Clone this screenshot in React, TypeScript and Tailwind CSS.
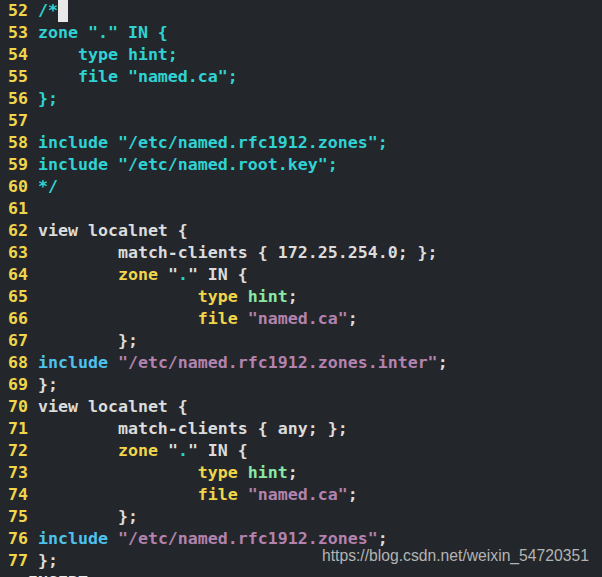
import React from "react";

type Seg = [string, string];

const W = "text-[#dcdcdc]";
const C = "text-[#2fd3d3]";
const Y = "text-[#f1d54a]";
const G = "text-[#8ae8a6]";
const B = "text-[#4ec2ec]";
const P = "text-[#b482ae]";

const T = "        ";

const zoneBlock = (): Seg[][] => [
  [[T, W], ["zone", Y], [" \"", W], [".", C], ["\" IN {", W]],
  [[T + T, W], ["type", Y], [" ", W], ["hint", G], [";", W]],
  [[T + T, W], ["file", Y], [" ", W], ["\"named.ca\"", P], [";", W]],
  [[T + "};", W]],
];

const lines: Seg[][] = [
  [["/*", C]],
  [["zone \".\" IN {", C]],
  [["    type hint;", C]],
  [["    file \"named.ca\";", C]],
  [["};", C]],
  [],
  [["include \"/etc/named.rfc1912.zones\";", C]],
  [["include \"/etc/named.root.key\";", C]],
  [["*/", C]],
  [],
  [["view localnet {", W]],
  [[T + "match-clients { 172.25.254.0; };", W]],
  ...zoneBlock(),
  [["include", B], [" ", W], ["\"/etc/named.rfc1912.zones.inter\"", P], [";", W]],
  [["};", W]],
  [["view localnet {", W]],
  [[T + "match-clients { any; };", W]],
  ...zoneBlock(),
  [["include", B], [" ", W], ["\"/etc/named.rfc1912.zones\"", P], [";", W]],
  [["};", W]],
];

export default function App() {
  return (
    <div className="relative h-[577px] w-full overflow-hidden bg-[#23272b]">
      <div
        className="pl-[8px] font-bold text-[16.6px] leading-[22px] whitespace-pre"
        style={{ fontFamily: '"DejaVu Sans Mono", monospace' }}
      >
        {lines.map((segs, i) => (
          <div key={i} className="flex h-[22px]">
            <span className={Y}>{String(52 + i)} </span>
            {segs.map(([t, c], j) => (
              <span key={j} className={c}>
                {t}
              </span>
            ))}
            {i === 0 && <span className="inline-block h-[22px] w-[10px] bg-[#e8e8e8]" />}
          </div>
        ))}
        <div className="flex h-[22px] -ml-[10px] text-[#eeeeee]">{"-- INSERT --"}</div>
      </div>
      <div
        className="absolute left-[322px] top-[546px] text-[15.7px] leading-[20px] text-[#b4b4b4]"
        style={{ fontFamily: '"Liberation Sans", Arial, sans-serif' }}
      >
        https://blog.csdn.net/weixin_54720351
      </div>
    </div>
  );
}
